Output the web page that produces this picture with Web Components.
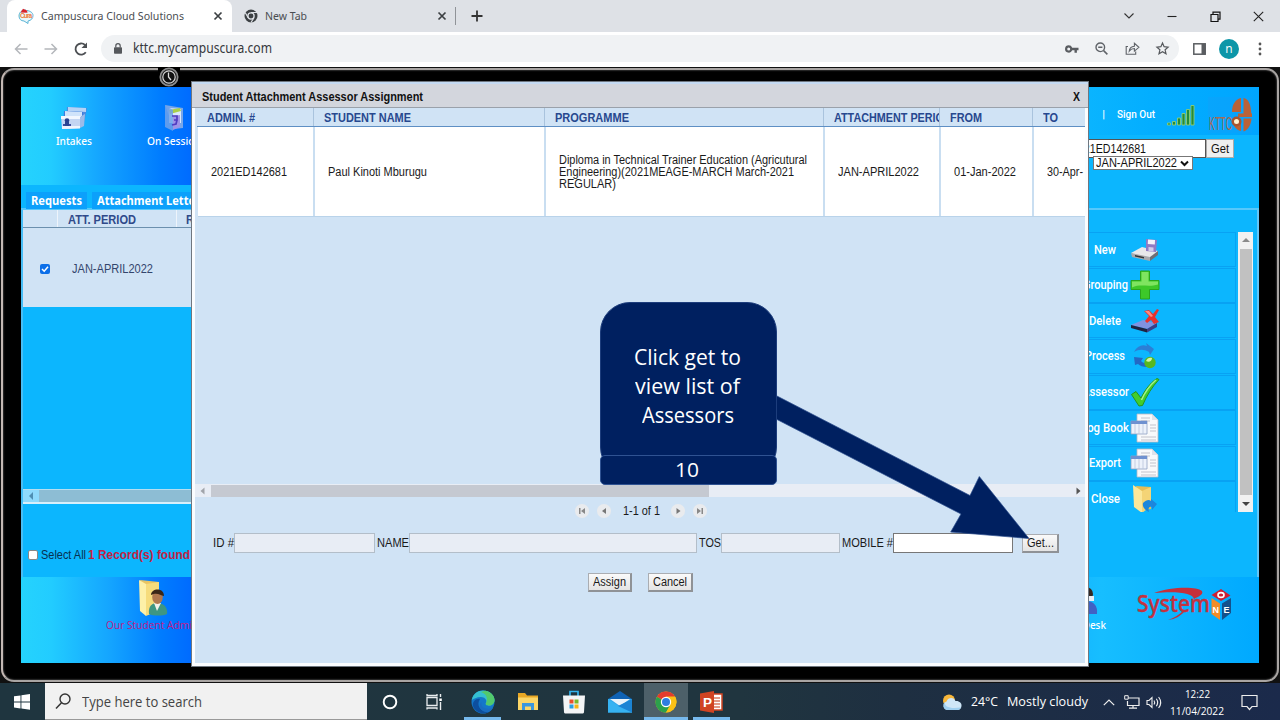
<!DOCTYPE html>
<html lang="en">
<head>
<meta charset="utf-8">
<title>Campuscura Cloud Solutions</title>
<style>
html,body{margin:0;height:720px;overflow:hidden}
body{width:1280px;display:flex;flex-direction:column;position:relative;font-family:"Liberation Sans",Arial,sans-serif;background:#000}
</style>
</head>
<body>
<browser-bar></browser-bar>
<monitor-frame>
  <campus-app></campus-app>
</monitor-frame>
<task-bar></task-bar>
<assign-dialog></assign-dialog>
<step-callout number="10"><fit-text w="107">Click get to</fit-text><fit-text w="105">view list of</fit-text><fit-text w="92">Assessors</fit-text></step-callout>

<script>
const base = (cls, css, html) => class extends HTMLElement {
  connectedCallback() {
    if (this.shadowRoot) return;
    this.attachShadow({mode: 'open'}).innerHTML =
      '<style>:host,*{box-sizing:border-box}' + css + '</style>' + (typeof html === 'function' ? html(this) : html);
  }
};

/* ---------- icons ---------- */
const ICONS = {
  cura: [16,16,'<path d="M8 2C3 2 1 5 1 8s2 5 5 5l4 2.500v-2.500c3-.5 5-2.500 5-5.500S12 3 9 2.500" fill="#eaf6fa" stroke="#5bb5d6" stroke-width="1"/><path d="M2.500 4.500 5 .800l4 1.800.5 2.200z" fill="#d8232c"/><text x="2" y="10.300" font-size="6.500" font-weight="bold" fill="#ee7b3a" font-family="Liberation Sans" textLength="12">Cura</text>'],
  chromeDark: [14,14,'<circle cx="7" cy="7" r="6.500" fill="#3c4043"/><circle cx="7" cy="7" r="3.100" fill="#3c4043" stroke="#dee1e6" stroke-width="1.300"/><path d="M7 3.500h6M4.200 8.800 1.300 3.700M9.800 9 7 13.500" stroke="#dee1e6" stroke-width="1.200"/>'],
  x: [10,10,'<path d="M1.500 1.500l7 7m0-7l-7 7" stroke="#3c4043" stroke-width="1.700"/>'],
  plus: [12,12,'<path d="M6 .5v11M.5 6h11" stroke="#333" stroke-width="1.800"/>'],
  chev: [12,8,'<path d="M1.500 1.500 6 6l4.500-4.500" fill="none" stroke="#333" stroke-width="1.100"/>'],
  min: [10,10,'<path d="M.5 5.500h9" stroke="#222" stroke-width="1.100"/>'],
  restore: [11,11,'<path d="M1 3.500h7v7H1zM3 3.500V1.200h7v7H8" fill="none" stroke="#111" stroke-width="1.200"/>'],
  close: [11,11,'<path d="M.8.8l9.400 9.400m0-9.400L.8 10.200" stroke="#222" stroke-width="1.100"/>'],
  back: [14,12,'<path d="M13.500 6H1.500M6.500 1l-5 5 5 5" fill="none" stroke="#b4b7bb" stroke-width="1.500"/>'],
  fwd: [14,12,'<path d="M.5 6h12M7.500 1l5 5-5 5" fill="none" stroke="#b4b7bb" stroke-width="1.500"/>'],
  reload: [14,14,'<path d="M11.800 10.200A5.600 5.600 0 1 1 11 3" fill="none" stroke="#4c4f53" stroke-width="1.800"/><path d="M13 .5v5.500H7.500z" fill="#4c4f53"/>'],
  lock: [8,11,'<rect x="0" y="4.300" width="8" height="6.500" rx=".8" fill="#55585c"/><path d="M1.800 4.500V2.900a2.200 2.200 0 0 1 4.400 0v1.600" fill="none" stroke="#55585c" stroke-width="1.200"/>'],
  key: [14,8,'<path d="M3.700 0.300a3.700 3.700 0 1 0 3.500 5h2.300v2.400h2.400V5.300H13.500V2.700H7.200A3.700 3.700 0 0 0 3.700.3zm0 2.200a1.500 1.500 0 1 1 0 3 1.500 1.500 0 0 1 0-3z" fill="#5a5d61" fill-rule="evenodd"/>'],
  zoomout: [13,13,'<circle cx="5.300" cy="5.300" r="4.300" fill="none" stroke="#5f6368" stroke-width="1.400"/><path d="M8.600 8.600l3.800 3.800M3.200 5.300h4.200" stroke="#5f6368" stroke-width="1.500"/>'],
  share: [15,13,'<path d="M3 4.500H1.200v7.700h9.500V9.500" fill="none" stroke="#5f6368" stroke-width="1.100"/><path d="M4.200 9.200c.3-3 2-4.800 5.200-5V1.300l4.500 4-4.500 3.800V6.500C7 6.500 5.600 7.400 4.200 9.200z" fill="none" stroke="#5f6368" stroke-width="1.100"/>'],
  star: [13,13,'<path d="M6.500 1l1.600 3.700 4 .4-3 2.700.9 4-3.500-2.100L3 11.800l.9-4-3-2.700 4-.4z" fill="none" stroke="#55585c" stroke-width="1.200"/>'],
  side: [13,12,'<rect x=".8" y=".8" width="11.400" height="10.400" fill="#fff" stroke="#5a5d61" stroke-width="1.500"/><path d="M8.500 1h4v10.500h-4z" fill="#5a5d61"/>'],
  dots: [4,14,'<circle cx="2" cy="2" r="1.400" fill="#555"/><circle cx="2" cy="7" r="1.400" fill="#555"/><circle cx="2" cy="12" r="1.400" fill="#555"/>'],
  clock: [22,20,'<path fill="#000" d="M0 0h22v20H0z"/><circle cx="11" cy="10" r="8.700" fill="#222" stroke="#8d8d8d" stroke-width="1.700"/><circle cx="11" cy="10" r="6.200" fill="#111" stroke="#d5d5d5" stroke-width="1.200"/><path d="M10.500 5.500V10l2.500 3" fill="none" stroke="#ddd" stroke-width="1.300"/>'],
  intakes: [28,26,'<path d="M7 2l20 1-3 15H6z" fill="#4d8ae0"/><path d="M8 2l18 1v4L8 6z" fill="#b5d3f6"/><path d="M4 6l19 1-1 14H3z" fill="#3f7bd8"/><path d="M5 6l17 1v4H5z" fill="#d0e3fa"/><path d="M1 11l20 0-1 12L2 24z" fill="#c3d5f2"/><path d="M1 11h20v3H1z" fill="#f2f7ff"/><path d="M3 19h8v3H3z" fill="#3c4fa0"/><path d="M2 21h18v2.500L2 24z" fill="#eef4fd"/><circle cx="7" cy="15.500" r="2.300" fill="#27408e"/><path d="M5 17h4v4H5z" fill="#2b4592"/><path d="M20 12l5-3-1 12-4 2z" fill="#9dbbe8"/>'],
  session: [22,28,'<path d="M2 1l18 3v20l-9 1z" fill="#79a6e8"/><path d="M6 4l12 1v14H6z" fill="#dbe9fb"/><path d="M6 6l11-2 1 3-11 3z" fill="#a8cf4a"/><path d="M2 1l8 5v21l-8-4z" fill="#6fa2ea" opacity=".85"/><path d="M10 12l7-1v12l-7 3z" fill="#9f93e8"/><path d="M9 12h5v4h-3M14 16l-1 4-4 1" fill="none" stroke="#503cc0" stroke-width="1.700"/>'],
  signal: [28,22,'<g fill="#238b3c" stroke="#9ed36d" stroke-width=".8"><path d="M.5 19h3v2h-3zM5.500 17.500h3V21h-3zM10.500 14h3v7h-3zM15 9.500h3V21h-3zM19.500 5.500h3V21h-3zM24 1.500h3V21h-3z"/></g>'],
  kttc: [44,36,'<rect width="44" height="36" fill="#1a9cf5" opacity=".3"/><g fill="#ba6237"><path d="M33 1v14H24C24 7 28 2 33 1zM35.500 1c5 1 7.500 6 7.800 16h-7.800zM24 22c1 7 4 11 9 12V22zM35.500 21.500h8c-.5 7-4 12-8 13z"/></g><path d="M30 16.500h14v3.500H30z" fill="#ba6237"/><circle cx="28.500" cy="24.500" r="5" fill="#a95530"/><circle cx="28.500" cy="24.500" r="2.500" fill="#fff3d0"/><text x="1" y="33" font-size="19" fill="#a76b55" font-family="Liberation Sans" textLength="23" lengthAdjust="spacingAndGlyphs">KTTC</text>'],
  drive: [30,24,'<path d="M1 15l11-6 16 4-8 9z" fill="#e8e8ea"/><path d="M1 15l19 4v4L2 19z" fill="#a9a9ad"/><path d="M20 19l8-6v4l-8 6z" fill="#6f6f75"/><path d="M5 17l9 2v1.500l-9-2z" fill="#333"/><path d="M16 1l11 1-1 12-10-1z" fill="#8f7bc4"/><path d="M18 1.500l7 .6-.2 4.500-7-.5z" fill="#f5f3fb"/><path d="M18.500 9l5 .4v4l-5-.4z" fill="#d2cdea"/>'],
  add: [30,30,'<path d="M10.500 1h9v9.500H29v9h-9.500V29h-9v-9.500H1v-9h9.500z" fill="#3dc829" stroke="#2aa51c"/><path d="M11.500 2h7v9.500H28v3c-9 3-18-1-26 3v-6h9.500z" fill="#95ee73" opacity=".75"/>'],
  del: [30,25,'<path d="M1 17l12-5 14 3-10 6z" fill="#8092e0"/><path d="M1 17l16 4v3.500L1 20z" fill="#1f2240"/><path d="M17 21l10-6v4l-10 5.500z" fill="#3b3f86"/><path d="M14 3l5-1 4 4 4-5 2 1-4 7 4 5-5 2-3-4-4 3-2-2 4-5z" fill="#e8322c"/><path d="M15 3l4 0 4 5-2 1z" fill="#ff8b80"/>'],
  proc: [26,26,'<path d="M2 9C5 3 10 1 15 3l-1-3 8 6-4 6-1-3C12 6 7 6 2 9z" fill="#2b7fd6"/><path d="M11 15l-2 3c2 2 3 2 6 2v4c-4 0-7-1-9-3l-3 1-1-8z" fill="#2368c4"/><circle cx="18" cy="19.500" r="5.700" fill="#58b81f"/><path d="M14 18c1-3 4-4 6-3 0 3-3 5-6 3z" fill="#d6f5a5"/>'],
  tick: [30,30,'<path d="M1.500 17.500 6 14.500l5 6.500C15 13 20 6 27 1.500l2 1C22 10 17 18 12.500 28.500L9 29z" fill="#43cd2d" stroke="#25961b"/><path d="M26 3C19 9 15 15 11.500 23" stroke="#a6f28c" stroke-width="1.500" fill="none"/>'],
  doc: [30,30,'<path d="M7 1h15l6 6v22H7z" fill="#f8f9fb" stroke="#b6b9c4" stroke-width=".8"/><path d="M22 1v6h6" fill="#dfe2ea"/><path d="M11 5h9M11 8h9M20 12h6M20 15h6M20 18h6M11 24h15M11 27h15" stroke="#c2c3cc"/><path d="M1 8h16v13H1z" fill="#edf2fb" stroke="#8fa1c4" stroke-width=".8"/><path d="M1 8h16v3H1z" fill="#6f91d0"/><path d="M5 11v10M9 11v10M13 11v10" stroke="#b9c4dc" stroke-width=".8"/>'],
  closef: [28,30,'<path d="M5 2l15 1v22l-10 2z" fill="#e5bd55"/><path d="M2 1l9 6v22l-8-6z" fill="#fbe79a"/><path d="M11 7l9-4v19l-9 7z" fill="#f4d476"/><path d="M12 19c3-3 6-4 8-2v-2l6 5-5 6v-3c-3-1-4 1-3 5-4-2-7-5-6-9z" fill="#1d86dc"/>'],
  student: [32,38,'<path d="M3 1l19 2v27L11 36z" fill="#e9c563"/><path d="M2 1l7 4v32l-6-5z" fill="#fdf0a8"/><path d="M9 5l13-2v28L9 37z" fill="#f6dc7c"/><path d="M12 35c-1-8 3-11 9-11s10 5 9 11c-4 2-14 2-18 0z" fill="#3e9682"/><path d="M17 24l3 8 4-8z" fill="#f3f1ea"/><ellipse cx="20.500" cy="18" rx="5.300" ry="7" fill="#b0784f"/><path d="M14 16c0-7 13-8 13 1-4-1-7-4-13-1z" fill="#3a2718"/>'],
  desk: [24,28,'<path d="M2 27c-1-9 3-13 10-13s12 4 11 13z" fill="#4161c4"/><circle cx="12" cy="7" r="7" fill="#332722"/><path d="M14 9h6v5h-6z" fill="#e9eef5"/>'],
  system: [98,38,'<path d="M18 6C34 0 60-1 66 4c2 4-5 6-8 8-1-6-16-8-40-6z" fill="#c6303c"/><path d="M32 33c6-2 11-5 15-9l1 1c-4 4-8 7-16 8z" fill="#c6303c"/><text x="1" y="25" font-size="23" font-weight="500" fill="#c3323f" stroke="#c3323f" stroke-width=".4" font-family="Noto Sans" textLength="73" lengthAdjust="spacingAndGlyphs">System</text><path d="M85 2l9.500 6.500L85 14l-9.500-6z" fill="#ce1f33"/><path d="M75.500 11 84 16.500V33l-8.500-6z" fill="#f28c28"/><path d="M86 16.500 95 11v15l-9 7z" fill="#14518c"/><ellipse cx="85" cy="8" rx="3" ry="2.400" fill="none" stroke="#fff" stroke-width="1.600"/><text x="76.500" y="26" font-size="9" font-weight="bold" fill="#fff" font-family="Liberation Sans">N</text><text x="87.500" y="26" font-size="9" font-weight="bold" fill="#fff" font-family="Liberation Sans">E</text>'],
  win: [16,16,'<path d="M0 2.300l6.500-.9v6H0zM7.400 1.300 16 0v7.400H7.400zM0 8.400h6.500v6L0 13.500zM7.400 8.400H16v7.400l-8.600-1.300z" fill="#fff"/>'],
  search: [17,17,'<circle cx="10" cy="6" r="5" fill="none" stroke="#333" stroke-width="1.400"/><path d="M6.500 9.800 1 15.500" stroke="#333" stroke-width="1.500"/>'],
  cortana: [16,16,'<circle cx="8" cy="8" r="6.300" fill="none" stroke="#fff" stroke-width="1.900"/>'],
  taskview: [17,16,'<path d="M1 3.500h10v8H1zM1 0v1.500h10V0M1 15.500V14h10v1.500" fill="none" stroke="#e8ecee" stroke-width="1.300"/><path d="M14.500 0v3M14.500 8v8" stroke="#e8ecee" stroke-width="1.400"/><path d="M13.300 4.500h2.500v2.500h-2.500z" fill="#fff"/>'],
  edge: [24,24,'<circle cx="12" cy="12" r="11.500" fill="#1477c9"/><path d="M.8 10C2 3.500 7 .5 12 .5c7 0 11.500 5 11.500 9.500 0 3.500-2.500 5.500-5.500 5.500-2 0-4-.8-3-2.500 1.500-3-1.500-6-5-6C5.500 7 2.500 9 .8 10z" fill="#35bfd0"/><path d="M14 .7c6 1 9.500 5 9.500 9.300 0 3.500-2.500 5.500-5.500 5.500-2 0-4-.8-3-2.500C17 9 16 4 10 2z" fill="#52c96c"/><path d="M9 9c-4 6 0 13 9 13-6 3-14 .5-16-6-1-4 3-8 7-7z" fill="#0d4f9e"/><path d="M10.500 12c-1 5 3 8 11.500 6-2 3-5 4-7 4-6-1-8-7-4.500-10z" fill="#1a6cc0"/>'],
  explorer: [22,19,'<path d="M1 1h7l2 2.500h11V18H1z" fill="#e9a825"/><path d="M1 5.500h20V18H1z" fill="#fcd667"/><path d="M5 18v-7h12v7h-3v-3.500H8V18z" fill="#3b97dd"/>'],
  store: [22,24,'<path d="M7 6V1.500h8V6" fill="none" stroke="#35b3ec" stroke-width="1.700"/><path d="M0 5.500h22L21 22c0 1-.8 1.500-2 1.500H3C1.800 23.500 1 23 1 22z" fill="#f4f5f6"/><path d="M6.500 9.500h4v4h-4z" fill="#e9502c"/><path d="M11.500 9.500h4v4h-4z" fill="#7ab82a"/><path d="M6.500 14.500h4v4h-4z" fill="#2a9fe0"/><path d="M11.500 14.500h4v4h-4z" fill="#f6b417"/>'],
  mail: [24,22,'<path d="M0 8 12 0l12 8v3H0z" fill="#0f62b4"/><path d="M0 8h24v13.500H0z" fill="#31a8ea"/><path d="M2 8h20L12 15z" fill="#e9f3fa"/><path d="M0 8l12 8L24 8v13.500H0z" fill="#36b3f2"/><path d="M24 8v13.500L10 15z" fill="#1b84d4"/>'],
  chrome: [22,22,'<circle cx="11" cy="11" r="10.500" fill="#fbc116"/><path d="M11 11 1.900 5.700A10.500 10.500 0 0 1 20.100 5.700z" fill="#e33b2e"/><path d="M11 11 1.900 5.700A10.500 10.500 0 0 0 11 21.500l4-6.800z" fill="#2ca14c"/><path d="M11 5.500h9l.2.300c1 1.500 1.300 3.300 1.300 5.200A10.500 10.500 0 0 1 11 21.500l4.500-8z" fill="#fbc116"/><circle cx="11" cy="11" r="5.200" fill="#fff"/><circle cx="11" cy="11" r="4" fill="#2f7de1"/>'],
  ppt: [23,22,'<path d="M11 3h11v16H11z" fill="#fff" stroke="#d04423" stroke-width="1.500"/><path d="M14 7h6M14 10h6M14 13h6M14 16h6" stroke="#d97a5f" stroke-width="1.300"/><path d="M0 2.500 14 0v22L0 19.500z" fill="#d04423"/><text x="3" y="16" font-size="13.500" font-weight="bold" fill="#fff" font-family="Liberation Sans">P</text>'],
  weather: [20,17,'<circle cx="7" cy="6.500" r="6" fill="#f8b73a"/><path d="M5 16a4.500 4.500 0 0 1-.5-8.500C6 3 12 3 13.500 7 17 6.500 20 9 19.500 12c-.2 2.500-2 4-4 4z" fill="#cfe6f7"/><path d="M5 16a4.500 4.500 0 0 1-2-8c-1 5 5 7 16 5.500-.8 1.700-2 2.500-3.500 2.500z" fill="#9fcff0"/>'],
  up: [12,7,'<path d="M.8 6.200 6 1l5.200 5.200" fill="none" stroke="#eee" stroke-width="1.200"/>'],
  net: [16,14,'<path d="M4 3h11v7.500H3.500V6M9 10.500V13M5 13.200h8" fill="none" stroke="#eee" stroke-width="1.200"/><path d="M.7.700h3.500v3.500H.7z" fill="#1d2b47" stroke="#eee"/>'],
  vol: [16,13,'<path d="M1 4.500h2L6 1.500v10L3 8.500H1zM8 4.500q1.300 2 0 4M10.300 2.800q2.700 3.700 0 7.400M12.600 1q4.200 5.500 0 11" fill="none" stroke="#eee" stroke-width="1.100"/>'],
  note: [17,17,'<path d="M1 1.500h15v11h-5L8.500 15.500 6 12.500H1z" fill="none" stroke="#eee" stroke-width="1.200"/>']
};
customElements.define('ui-icon', class extends HTMLElement {
  connectedCallback() {
    if (this.shadowRoot) return;
    const [w, h, s] = ICONS[this.getAttribute('name')];
    this.attachShadow({mode: 'open'}).innerHTML =
      `<style>:host{display:block;flex:none;width:${w}px;height:${h}px}svg{display:block;overflow:visible}</style><svg width="${w}" height="${h}" viewBox="0 0 ${w} ${h}">${s}</svg>`;
  }
});

/* ---------- browser chrome ---------- */
customElements.define('browser-tab', base('', `
:host{display:flex;align-items:center;height:32px;font:11.500px/32px "Noto Sans",sans-serif;color:#4a4d51;flex:none}
.t{flex:1;margin-left:7px}`,
  '<slot name="icon"></slot><div class="t"><slot></slot></div><ui-icon name="x"></ui-icon>'));

customElements.define('browser-bar', base('', `
:host{display:flex;flex-direction:column;height:67px;flex:none;background:#fff}
.tabs{display:flex;height:32px;background:#dee1e6;align-items:center}
.a{background:#fff;width:225px;margin-left:7px;padding:0 9px 0 11px;border-radius:8px 8px 0 0}
.b{width:223px;padding:0 8px 0 12px}
.sep{width:1px;height:18px;background:#909398;margin:0 15px 0 0}
.wc{margin-left:auto;display:flex;align-items:center;height:26px}
.bar{display:flex;flex:1;align-items:center;padding-bottom:2px;height:35px}
.url{display:flex;align-items:center;height:27px;border-radius:14px;background:#f0f2f4;width:1078px;margin-left:13px;padding:0 10px 0 13px;color:#35383c;font:13.500px/27px "Noto Sans",sans-serif}
.av{width:20px;height:20px;border-radius:50%;background:#0d96a8;color:#fff;font:12px/19px "Open Sans",sans-serif;text-align:center;margin:0 19px 0 13px}
`, `<div class="tabs">
<browser-tab class="a"><ui-icon slot="icon" name="cura"></ui-icon><fit-text w="143">Campuscura Cloud Solutions</fit-text></browser-tab>
<browser-tab class="b"><ui-icon slot="icon" name="chromeDark"></ui-icon><fit-text w="42">New Tab</fit-text></browser-tab>
<div class="sep"></div><ui-icon name="plus"></ui-icon>
<div class="wc"><ui-icon name="chev" style="margin-right:32px"></ui-icon><ui-icon name="min" style="margin-right:33px"></ui-icon><ui-icon name="restore" style="margin-right:32px"></ui-icon><ui-icon name="close" style="margin-right:16px"></ui-icon></div></div>
<div class="bar"><ui-icon name="back" style="margin-left:14px"></ui-icon><ui-icon name="fwd" style="margin-left:16px"></ui-icon><ui-icon name="reload" style="margin-left:16px"></ui-icon>
<div class="url"><ui-icon name="lock" style="margin-right:11px"></ui-icon><fit-text w="139">kttc.mycampuscura.com</fit-text>
<ui-icon name="key" style="margin-left:auto"></ui-icon><ui-icon name="zoomout" style="margin-left:16px"></ui-icon><ui-icon name="share" style="margin-left:17px"></ui-icon><ui-icon name="star" style="margin-left:16px"></ui-icon></div>
<ui-icon name="side" style="margin-left:14px"></ui-icon><div class="av">n</div><ui-icon name="dots"></ui-icon></div>`));

/* ---------- monitor ---------- */
customElements.define('monitor-frame', base('', `
:host{display:flex;flex:none;height:616px;background:#111;padding:1px;position:relative}
.f{flex:1;border:2px solid #a9a5a3;border-left-color:#c4b8b3;border-radius:13px;background:#000;padding:17px 17px 17px 18px;display:flex;box-shadow:inset 0 0 2px #888}
.c{position:absolute;left:158px;top:0}`,
  '<div class="f"><slot></slot></div><ui-icon class="c" name="clock"></ui-icon>'));

customElements.define('menu-row', base('', `
:host{display:flex;height:35px;margin-bottom:.65px;border:1px solid #08a2f3;align-items:center;color:#fff;font:500 12px/16px Roboto,sans-serif;flex:none}
.l{width:60px;margin-left:34px;display:flex;justify-content:center;white-space:nowrap}
.i{width:32px;margin-left:-6px;display:flex;justify-content:center}`,
  '<div class="l"><slot></slot></div><div class="i"><slot name="icon"></slot></div>'));

const menu = [['New','drive',22],['Grouping','add',45],['Delete','del',32],['Process','proc',40],['Assessor','tick',47],['Log Book','doc',48],['Export','doc',32],['Close','closef',29]]
  .map(([t,i,w]) => `<menu-row><fit-text w="${w}">${t}</fit-text><ui-icon slot="icon" name="${i}"></ui-icon></menu-row>`).join('');

customElements.define('campus-app', base('', `
:host{display:flex;flex-direction:column;width:1238px;height:576px;background:#0cb6fe;overflow:hidden;font:11px/14px "Liberation Sans",Arial,sans-serif;color:#123}
.top{display:flex;height:98px;flex:none}
.tl{width:700px;display:flex;color:#fff;font:500 11px/14px "Noto Sans",sans-serif;background:linear-gradient(90deg,#25d3fd,#22ccff 30px,#14a4ff 80px,#007cff 140px,#006aff 172px)}
.tl>div{display:flex;flex-direction:column;align-items:center}
.s1{width:40px;margin-left:33px;padding-top:18px}.s1 ui-icon{margin-bottom:3px}
.s2{width:60px;margin-left:50px;padding-top:17px}.s2 ui-icon{margin-bottom:2px}
.tr{flex:1}
.tr .h{display:flex;height:48px;align-items:center;justify-content:flex-end;padding:8px 7px 0 0;background:linear-gradient(90deg,#0cb6fe 350px,#03aeff 430px,#00a5ff);color:#fff;font:500 11px/14px Roboto,sans-serif}
.q{display:flex;justify-content:flex-end;padding:4px 25px 0 0}
.q div{height:19px}
.in{width:190px;background:#fff;border:1px solid #555;padding:2px 59px 0 0;font-size:12px;color:#111;display:flex;justify-content:flex-end}
.b{width:28px;background:#efefef;border:1px solid #aaa;font-size:12px;padding-top:2px;color:#111;padding-left:4px}
.sel{display:flex;align-items:center;width:100px;height:14px;background:#fff;border:1px solid #777;margin:-2px 66px 0 auto;padding-left:2px;color:#111;font-size:12px;position:relative}
.sel svg{margin-left:3px}
.tabs{display:flex;height:25px;flex:none;padding:7px 0 0 5px;gap:5px;border-bottom:2px solid #57c8fb;color:#fff;font:bold 12px/17px "Noto Sans",sans-serif}
.tabs div{background:#0ca0fb;height:17px;padding-left:5px}
.main{display:flex;height:367px;border-left:2px solid #48bdf5;border-right:2px solid #63c6f8;flex:none}
.left{flex:1}
.th{display:flex;height:18px;background:#d0e3f5;border-bottom:1px solid #6c90ae;color:#2f4a8a;font:bold 12px/20px "Liberation Sans"}
.th div{border-right:1px solid #eef4fb}
.row{display:flex;height:79px;background:#d0e3f5;align-items:center;color:#33456c;font-size:12px;padding-top:2px}
.cb{width:10px;height:10px;border-radius:2px;background:#0c6fe8;margin:0 23px 0 17px}.cb svg{display:block}
.sb{display:flex;height:15px;margin-top:182px;background:#8dbdd4;border-top:1px solid #b7def0;border-bottom:2px solid #d8effb}
.sb div{width:16px;background:#8edafc}
.foot{display:flex;align-items:center;margin-top:44px;color:#073050;font-size:12px}
.foot i{width:10px;height:10px;background:#fff;border:1px solid #888;border-radius:2px;margin:0 3px 0 5px}
.foot b{color:#c31f43;margin-left:2px;font-size:12px}
.right{width:217px;display:flex;padding:22px 4px 0 0}
.menu{height:280px;overflow:hidden;flex:1}
.vs{width:15px;height:280px;background:#f1f1f1;margin-left:2px;display:flex;flex-direction:column;align-items:center;justify-content:space-between;padding:6px 0}
.vs div{width:12px;height:246px;background:#c1c1c1}
.bot{display:flex;flex:1;background:linear-gradient(90deg,#25d3fd,#22ccff 30px,#14a4ff 90px,#007cff 140px,#006aff 172px,#006aff 800px,#17beff 1080px,#00a9ff 1238px)}
.st{width:100px;margin-left:85px;display:flex;flex-direction:column;padding-top:2px;color:#c01a88;font:11px/14px "Open Sans",sans-serif}
.st ui-icon{margin:0 0 1px 31px}
.dk{margin-left:auto;display:flex;flex-direction:column;align-items:flex-end;color:#fff;font:500 11px/14px "Noto Sans",sans-serif;padding-top:10px;width:80px}
`, `<div class="top"><div class="tl"><div class="s1"><ui-icon name="intakes"></ui-icon><fit-text w="36">Intakes</fit-text></div>
<div class="s2"><ui-icon name="session"></ui-icon><fit-text w="54">On Session</fit-text></div></div>
<div class="tr"><div class="h"><span style="margin-right:12px">|</span><fit-text w="38">Sign Out</fit-text><ui-icon name="signal" style="margin:0 13px 0 12px"></ui-icon><ui-icon name="kttc"></ui-icon></div>
<div class="q"><div class="in"><fit-text w="74">2021ED142681</fit-text></div><div class="b"><fit-text w="18">Get</fit-text></div></div>
<div class="sel"><fit-text w="81">JAN-APRIL2022</fit-text><svg width="9" height="7"><path d="M1 1.500l3.500 3.500L8 1.500" fill="none" stroke="#111" stroke-width="2"/></svg></div></div></div>
<div class="tabs"><div style="width:61px"><fit-text w="51">Requests</fit-text></div><div style="width:108px"><fit-text w="103">Attachment Letter</fit-text></div></div>
<div class="main"><div class="left"><div class="th"><div style="width:35px"></div><div style="width:119px;padding-left:10px"><fit-text w="68">ATT. PERIOD</fit-text></div><div style="width:100px;padding-left:9px;border:0"><fit-text w="60">REG. DATE</fit-text></div></div>
<div class="row"><div class="cb"><svg width="10" height="10"><path d="M2 5l2.200 2.200L8 2.800" fill="none" stroke="#fff" stroke-width="1.500"/></svg></div><fit-text w="81" style="margin-left:-1px">JAN-APRIL2022</fit-text></div>
<div class="sb"><div><svg width="16" height="12"><path d="M10 2v8L6 6z" fill="#4f8fb3"/></svg></div></div>
<div class="foot"><i></i><fit-text w="45">Select All</fit-text><b><fit-text w="102">1 Record(s) found</fit-text></b></div></div>
<div class="right"><div class="menu">${menu}</div><div class="vs"><svg width="8" height="4"><path d="M0 4l4-4 4 4z" fill="#8a8a8a"/></svg><div></div><svg width="8" height="4"><path d="M0 0l4 4 4-4z" fill="#444"/></svg></div></div></div>
<div class="bot"><div class="st"><ui-icon name="student"></ui-icon><fit-text w="92">Our Student Admin</fit-text></div>
<div class="dk"><ui-icon name="desk" style="margin:0 8px 3px 0"></ui-icon><fit-text w="48">Help Desk</fit-text></div>
<ui-icon name="system" style="margin:10px 25px 0 30px"></ui-icon></div>`));

/* ---------- dialog ---------- */
const cols = [117,231,279,116,93,60];
customElements.define('assign-dialog', base('', `
:host{position:absolute;left:191px;top:81px;width:898px;height:586px;display:flex;flex-direction:column;border:1px solid #6f7780;background:#d0e3f5;font:12px/14px "Liberation Sans",Arial,sans-serif;color:#1a1a1a}
.t{display:flex;align-items:center;justify-content:space-between;height:26px;background:#d3d6dd;border-top:2px solid #c4daf2;border-bottom:1px solid #9aa1aa;padding:2px 8px 0 10px;font-weight:bold;color:#111;flex:none}
.body{flex:1;border:solid #fbfdff;border-width:0 3px 3px 3px;display:flex;flex-direction:column;overflow:hidden}
.tb{padding-left:2px;width:890px;overflow:hidden;flex:none}
.h,.r{display:flex;width:896px}
.h{height:19px;border-bottom:1px solid #5e8fc4;color:#27488f;font:bold 12px/20px "Liberation Sans"}
.h div{padding-left:10px;border-right:1px solid #a9c3dd;flex:none;overflow:hidden}
.r{height:90px;background:#fff;border-bottom:1px solid #b9d3ea;margin-left:1px}
.r div{padding-left:13px;border-right:2px solid #c9def1;flex:none;display:flex;flex-direction:column;justify-content:center;line-height:12.300px;padding-top:1px;overflow:hidden}
.sb{display:flex;align-items:center;justify-content:space-between;height:13px;background:#e8edf5;margin-top:267px;padding:0 4px 0 5px;width:890px;flex:none}
.sb div{height:12px;width:498px;background:#c5c9d1;margin:0 auto 0 6px}
.pg{display:flex;align-items:center;height:14px;margin:7px 0 0 380px}
.pg i{width:14px;height:14px;border-radius:50%;background:#e9ebee;flex:none}.pg svg{display:block}
.f{display:flex;align-items:center;margin:15px 0 0 18px;height:20px}
.f .i{height:20px;border:1px solid #b3bec9;background:#e8edf5;flex:none;margin-right:2px}
.bt{height:19px;border:1px solid #aaadb2;border-right:2px solid #8f9296;border-bottom:2px solid #8f9296;background:linear-gradient(#fafafa,#e4e4e4);display:flex;justify-content:center;align-items:center}
.x{display:flex;gap:16px;margin:20px 0 0 393px}
`, `<div class="t"><fit-text w="221">Student Attachment Assessor Assignment</fit-text><fit-text w="7">X</fit-text></div>
<div class="body"><div class="tb"><div class="h">${[['ADMIN. #',48],['STUDENT NAME',87],['PROGRAMME',74],['ATTACHMENT PERIO',110],['FROM',32],['TO',15]].map(([t,w],i)=>`<div style="width:${cols[i]}px"><fit-text w="${w}">${t}</fit-text></div>`).join('')}</div>
<div class="r">${[[['2021ED142681',76]],[['Paul Kinoti Mburugu',99]],[['Diploma in Technical Trainer Education (Agricutural',248],['Engineering)(2021MEAGE-MARCH March-2021',235],['REGULAR)',57]],[['JAN-APRIL2022',81]],[['01-Jan-2022',62]],[['30-Apr-',36]]].map((c,i)=>`<div style="width:${cols[i]}px">${c.map(([t,w])=>`<fit-text w="${w}">${t}</fit-text>`).join('')}</div>`).join('')}</div></div>
<div class="sb"><svg width="5" height="8"><path d="M4.500.5v7L.5 4z" fill="#a0a4aa"/></svg><div></div><svg width="5" height="8"><path d="M.5.5v7l4-3.500z" fill="#555"/></svg></div>
<div class="pg"><i><svg width="14" height="14"><path d="M4 4h1.500v6H4zM10 4v6L6 7z" fill="#888"/></svg></i><i style="margin-left:8px"><svg width="14" height="14"><path d="M9 4v6L5 7z" fill="#777"/></svg></i><fit-text w="37" style="margin:0 11px 0 12px">1-1 of 1</fit-text><i><svg width="14" height="14"><path d="M5.500 4v6l4-3z" fill="#777"/></svg></i><i style="margin-left:8px"><svg width="14" height="14"><path d="M8.500 4H10v6H8.500zM4 4v6l4-3z" fill="#888"/></svg></i></div>
<div class="f"><fit-text w="21">ID #</fit-text><div class="i" style="width:141px"></div><fit-text w="32">NAME</fit-text><div class="i" style="width:288px"></div><fit-text w="22">TOS</fit-text><div class="i" style="width:119px"></div><fit-text w="51">MOBILE #</fit-text><div class="i" style="width:120px;background:#fff;border-color:#777;margin-right:9px"></div><div class="bt" style="width:37px"><fit-text w="27">Get...</fit-text></div></div>
<div class="x"><div class="bt" style="width:44px"><fit-text w="33">Assign</fit-text></div><div class="bt" style="width:45px"><fit-text w="34">Cancel</fit-text></div></div>
</div>`));

/* ---------- tutorial callout ---------- */
customElements.define('step-callout', base('', `
:host{position:absolute;left:600px;top:302px;width:430px;height:238px;color:#fff;font:21px/29px "Open Sans",sans-serif}
svg{position:absolute;left:0;top:0}
.m{position:relative;display:flex;flex-direction:column;align-items:center;width:177px;height:175px;border-radius:30px;background:#002060;border:1px solid #1d3d7c;padding:40px 2px 0 0}
.n{position:relative;width:177px;height:30px;margin-top:-22px;border-radius:5px;background:#002060;border:1px solid #2f5292;display:flex;justify-content:center;font-size:20.500px;line-height:26px;padding-right:3px}`,
  h => `<svg width="430" height="238"><path d="M170 90.500 177 94 370 193.500 379.300 174.500 429 236.500 350.700 230 361 212 177 117.500 170 114z" fill="#002060" stroke="#2a4c8c" stroke-width=".7"/></svg><div class="m"><slot></slot></div><div class="n"><fit-text w="24">${h.getAttribute('number')}</fit-text></div>`));

/* ---------- taskbar ---------- */
customElements.define('task-item', base('', `
:host{display:flex;width:44px;height:37px;align-items:center;justify-content:center;margin-right:2px;border-bottom:3px solid transparent;padding-top:3px;flex:none}
:host([open]){border-bottom-color:#76b9ed}
:host([active]){background:#4d6069}`, '<slot></slot>'));
customElements.define('task-bar', base('', `
:host{display:flex;height:37px;flex:none;background:linear-gradient(90deg,#1f353f 0,#20353f 740px,#1e2f41 900px,#1b2a4b 1280px);align-items:center;color:#fff;font:12.500px/16px "Open Sans",sans-serif}
.s{display:flex;align-items:center;width:322px;height:37px;background:#f1f1f1;color:#444;padding:1px 0 0 10px;border-bottom:1px solid #999;font-size:14px}
.w{width:45px;padding-left:14px}
.c{display:flex;flex-direction:column;align-items:center;font-size:11.500px;line-height:17px;margin:-1px 15px 0 8px}
.r{margin-left:auto;display:flex;align-items:center;padding-top:1px}`,
`<div class="w"><ui-icon name="win"></ui-icon></div><div class="s"><ui-icon name="search" style="margin-right:10px"></ui-icon><fit-text w="120">Type here to search</fit-text></div>
<task-item style="margin-left:1px;margin-right:0"><ui-icon name="cortana"></ui-icon></task-item><task-item style="width:45px;margin-right:7px"><ui-icon name="taskview"></ui-icon></task-item>
<task-item open style="width:37px;margin-right:5px"><ui-icon name="edge"></ui-icon></task-item><task-item><ui-icon name="explorer"></ui-icon></task-item><task-item><ui-icon name="store"></ui-icon></task-item><task-item><ui-icon name="mail"></ui-icon></task-item><task-item open active style="margin-right:5px"><ui-icon name="chrome"></ui-icon></task-item><task-item open style="width:37px"><ui-icon name="ppt"></ui-icon></task-item>
<div class="r"><ui-icon name="weather" style="margin-right:9px"></ui-icon><fit-text w="27">24°C</fit-text><fit-text w="81" style="margin:0 15px 0 9px">Mostly cloudy</fit-text><ui-icon name="up" style="margin-right:9px"></ui-icon><ui-icon name="net" style="margin-right:6px"></ui-icon><ui-icon name="vol"></ui-icon><div class="c" style="margin-right:17px"><fit-text w="25">12:22</fit-text><fit-text w="54">11/04/2022</fit-text></div><ui-icon name="note" style="margin-right:22px"></ui-icon></div>`));

/* Single-line label condensed or widened to the width given in "w". Registered last so inherited fonts are settled. */
customElements.define('fit-text', class extends HTMLElement {
  connectedCallback() {
    if (this.shadowRoot) return;
    const w = +this.getAttribute('w');
    this.attachShadow({mode: 'open'}).innerHTML =
      `<style>:host{display:block;flex:none;width:${w}px;white-space:nowrap}span{display:inline-block;transform-origin:0 50%}</style><span><slot></slot></span>`;
    const s = this.shadowRoot.querySelector('span');
    const n = s.getBoundingClientRect().width;
    if (n) s.style.transform = `scaleX(${w / n})`;
  }
});
</script>
</body>
</html>
